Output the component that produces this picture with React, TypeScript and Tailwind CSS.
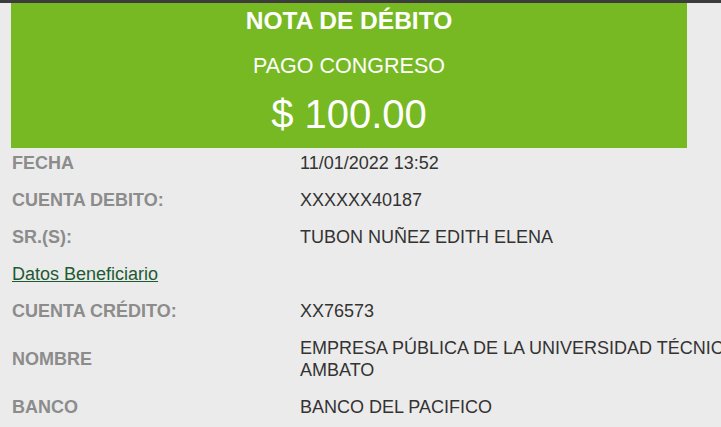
const ROWS = [
  { label: "FECHA", value: "11/01/2022 13:52" },
  { label: "CUENTA DEBITO:", value: "XXXXXX40187" },
  { label: "SR.(S):", value: "TUBON NUÑEZ EDITH ELENA" },
];

const BENEFICIARIO = [
  { label: "CUENTA CRÉDITO:", value: "XX76573" },
  { label: "NOMBRE", value: "EMPRESA PÚBLICA DE LA UNIVERSIDAD TÉCNICA DE AMBATO" },
  { label: "BANCO", value: "BANCO DEL PACIFICO" },
];

function Row({ label, value }: { label: string; value: string }) {
  return (
    <div className="flex items-center pt-[4px] pb-[11px] leading-[22px] text-[18px]">
      <div className="w-[300px] shrink-0 pl-[12px] font-bold text-[#8c8c8c]">{label}</div>
      <div className="w-[520px] shrink-0 text-[#333333]">{value}</div>
    </div>
  );
}

export default function App() {
  return (
    <div className="w-[721px] h-[427px] overflow-hidden bg-[#ebebeb] font-['Liberation_Sans',Arial,sans-serif]">
      <div className="h-[3px] bg-[#3c3c3c]" />
      <div className="ml-[11px] w-[676px] h-[145px] bg-[#77b922] text-white flex flex-col items-center">
        <div className="mt-[2px] text-[24.5px] font-bold leading-[32px]">NOTA DE DÉBITO</div>
        <div className="mt-[16px] text-[21.5px] leading-[26px]">PAGO CONGRESO</div>
        <div className="mt-[12px] text-[40px] leading-[46px]">$ 100.00</div>
      </div>
      <div className="w-[860px]">
        {ROWS.map((r) => (
          <Row key={r.label} {...r} />
        ))}
        <div className="pt-[4px] pb-[11px] leading-[22px] text-[18px] pl-[12px]">
          <a href="#" className="text-[#1d5a32] underline">Datos Beneficiario</a>
        </div>
        {BENEFICIARIO.map((r) => (
          <Row key={r.label} {...r} />
        ))}
      </div>
    </div>
  );
}
